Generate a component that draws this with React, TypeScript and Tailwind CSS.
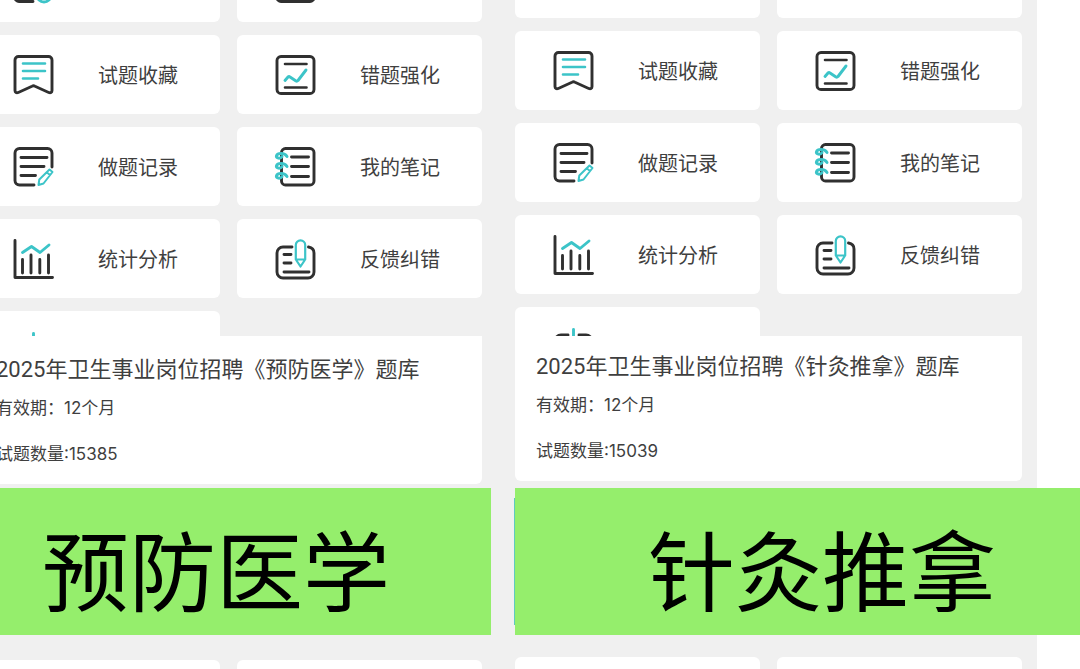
import type { ReactNode } from 'react';
import clsx from 'clsx';

const teal = '#3cc4c8';

const icons: Record<string, ReactNode> = {
  exam: (
    <>
      <path d="M20 38.500H6a4 4 0 0 1-4-4V6a4 4 0 0 1 4-4h28a4 4 0 0 1 4 4v14" />
      <circle cx="31" cy="32" r="7" stroke={teal} />
    </>
  ),
  paper: <rect x="2" y="2" width="37" height="36.500" rx="4" />,
  bookmark: (
    <>
      <path d="M2 5a3.500 3.500 0 0 1 3.500-3.500h30A3.500 3.500 0 0 1 39 5v30.500c0 2-1.500 2.800-3.300 2L22 31.200a3.400 3.400 0 0 0-3 0L5.300 37.500C3.500 38.300 2 37.500 2 35.500z" />
      <path d="M10 8.500h22M10 16h22M10 23.500h15" stroke={teal} strokeWidth="2.600" />
    </>
  ),
  chartBox: (
    <>
      <rect x="2" y="1.500" width="37" height="37" rx="4" />
      <path d="M10 9h21.500M10 32.500h21.500" strokeWidth="2.600" />
      <path d="M10 25.500l3-3.500q1-.8 2 0l6 4q1 .5 2-.5l8-10.500" stroke={teal} />
    </>
  ),
  record: (
    <>
      <path d="M39 20V6a4.500 4.500 0 0 0-4.500-4.500h-28A4.500 4.500 0 0 0 2 6v27.500A4.500 4.500 0 0 0 6.500 38H21" />
      <path d="M8 10.500h26M8 19.500h23M8 28.500h14.500" />
      <path d="M36.500 22.500l3 2.500-9 11.500-5 1.500.8-5.500zM34 25.500l3 2.500" stroke={teal} strokeWidth="2" />
    </>
  ),
  notebook: (
    <>
      <rect x="6.500" y="1.500" width="32.500" height="36.500" rx="4" />
      <path d="M16.500 10h17M16.500 19.500h17M16.500 29.500h17" />
      <path
        d="M12 9.500c-2.500-4-9.500-3.500-10.500-.8s4 3.300 5.500 1M12 19.500c-2.500-4-9.500-3.500-10.500-.8s4 3.300 5.500 1M12 29.500c-2.500-4-9.500-3.500-10.500-.8s4 3.300 5.500 1"
        stroke={teal}
        strokeWidth="3"
      />
    </>
  ),
  stats: (
    <>
      <path d="M2 1.500v37h37.500" />
      <path d="M9.500 20.500v13.500M18 16v18M26.800 20.500v13.500M35.500 16v18" />
      <path d="M9.500 13.500l9-6 8.500 6L36 6" stroke={teal} />
    </>
  ),
  feedback: (
    <>
      <path d="M17 8H8a6 6 0 0 0-6 6v19a6 6 0 0 0 6 6h25a6 6 0 0 0 6-6V14q0-5-5.500-6" />
      <path d="M9 15.500h7M9 24h7M9 33h25" />
      <path d="M20.800 20.500V6a4.700 4.700 0 0 1 9.400 0v14.500l-4.700 7zM20.800 20.500h9.400" stroke={teal} strokeWidth="2.200" />
    </>
  ),
  more: (
    <>
      <path d="M15 8H8a6 6 0 0 0-6 6v24M26 8h7a6 6 0 0 1 6 6v24" />
      <path d="M20.500 2.500v16" stroke={teal} />
    </>
  ),
};

const tiles = [
  { icon: 'exam', label: '' },
  { icon: 'paper', label: '' },
  { icon: 'bookmark', label: '试题收藏' },
  { icon: 'chartBox', label: '错题强化' },
  { icon: 'record', label: '做题记录' },
  { icon: 'notebook', label: '我的笔记' },
  { icon: 'stats', label: '统计分析' },
  { icon: 'feedback', label: '反馈纠错' },
  { icon: 'more', label: '' },
];

const tileClass = 'flex h-[79px] items-center gap-[45px] rounded-md bg-white pl-[38px]';

function TileIcon({ name }: { name: string }) {
  return (
    <svg
      className="size-10 shrink-0 overflow-visible"
      viewBox="0 0 40 40"
      fill="none"
      stroke="#303030"
      strokeWidth="2.900"
      strokeLinecap="round"
      strokeLinejoin="round"
      aria-hidden="true"
    >
      {icons[name]}
    </svg>
  );
}

function Tile({ icon, label }: { icon: string; label: string }) {
  if (!label) {
    return (
      <div className={tileClass}>
        <TileIcon name={icon} />
      </div>
    );
  }
  return (
    <button type="button" className={tileClass}>
      <TileIcon name={icon} />
      <span className="pt-0.5 text-xl whitespace-nowrap">{label}</span>
    </button>
  );
}

type ScreenProps = {
  subject: string;
  count: number;
  className: string;
  gridClass: string;
  infoClass: string;
  bannerClass: string;
  footerClass: string;
  children?: ReactNode;
};

function Screen({ subject, count, className, gridClass, infoClass, bannerClass, footerClass, children }: ScreenProps) {
  return (
    <section className={clsx('h-full bg-[#f0f0f0] pr-[15px] pl-[18px]', className)}>
      <div className="h-[336px] overflow-hidden">
        <div className={clsx('grid grid-cols-2 gap-x-[17px] gap-y-[13px]', gridClass)}>
          {tiles.map((tile) => (
            <Tile key={tile.icon} icon={tile.icon} label={tile.label} />
          ))}
        </div>
      </div>

      {/* Question bank details */}
      <div className={clsx('rounded-b-md bg-white pl-[21px] whitespace-nowrap', infoClass)}>
        <h2 className="text-[22px] leading-8">2025年卫生事业岗位招聘《{subject}》题库</h2>
        <div className="font-[Inter,'Noto_Sans_CJK_SC',sans-serif] text-[17px] leading-7">
          <p className="mt-2">有效期：12个月</p>
          <p className="mt-[18px]">试题数量:{count}</p>
        </div>
      </div>

      {/* Subject banner */}
      <div className={clsx('relative h-[147px] bg-[#95ee6c] text-black', bannerClass)}>
        {children}
        <h1 className="pt-[26px] text-[87px] leading-[123px] whitespace-nowrap">{subject}</h1>
      </div>

      <div className={clsx('grid grid-cols-2 gap-x-[17px]', footerClass)}>
        <div className="h-20 rounded-md bg-white" />
        <div className="h-20 rounded-md bg-white" />
      </div>
    </section>
  );
}

export default function App() {
  return (
    <main className="grid h-screen grid-cols-[497fr_583fr] overflow-hidden bg-white font-[Roboto,'Noto_Sans_CJK_SC',sans-serif] text-[#3f3f3f]">
      <Screen
        subject="预防医学"
        count={15385}
        className="-ml-[43px]"
        gridClass="-mt-[57px]"
        infoClass="h-[148px] pt-[18px]"
        bannerClass="mt-1 -mr-[9px] pl-[67px]"
        footerClass="mt-[25px]"
      />
      <Screen
        subject="针灸推拿"
        count={15039}
        className="mr-[43px]"
        gridClass="-mt-[61px]"
        infoClass="h-[145px] pt-[15px]"
        bannerClass="mt-[7px] -mr-[58px] pl-[133px]"
        footerClass="mt-[22px]"
      >
        <span className="absolute inset-y-2.5 -left-px w-px bg-[#5fc9c0]" />
      </Screen>
    </main>
  );
}
